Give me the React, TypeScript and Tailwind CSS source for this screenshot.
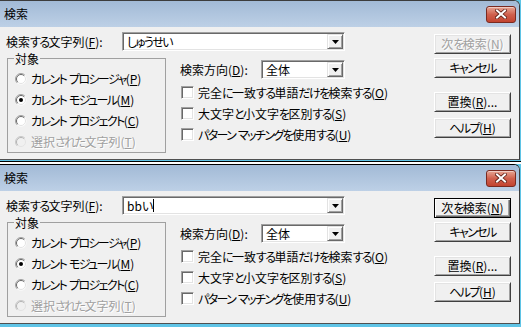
const SUNKEN =
  "border border-t-[#a0a0a0] border-l-[#a0a0a0] border-r-white border-b-white bg-white shadow-[inset_1px_1px_0_#696969,inset_-1px_-1px_0_#e3e3e3]";
const RAISED =
  "border border-t-[#e3e3e3] border-l-[#e3e3e3] border-r-[#696969] border-b-[#696969] bg-[#f0f0f0] shadow-[inset_1px_1px_0_#fff,inset_-1px_-1px_0_#a0a0a0]";

// kana in the reference font are narrower than in Noto, so tighten them
function J({ t }: { t: string }) {
  return (
    <>
      {t.split(/([\u3040-\u30ff]+)/).map((s, i) =>
        /[\u3040-\u30ff]/.test(s) ? (
          <span key={i} className="tracking-[-1.6px]">
            {s}
          </span>
        ) : (
          s
        )
      )}
    </>
  );
}

function Key({ k }: { k: string }) {
  return <span className="underline underline-offset-[1px]">{k}</span>;
}

function CloseButton() {
  return (
    <div className="flex h-[17px] w-[30px] items-center justify-center rounded-[3px] border border-[#7a2a20] bg-gradient-to-b from-[#e6a594] via-[#d0604d] to-[#c2432f] shadow-[inset_0_1px_0_rgba(255,255,255,0.45)]">
      <svg width="12" height="10" viewBox="0 0 12 10">
        <path d="M2 1.5 L10 8.5 M10 1.5 L2 8.5" stroke="#5b1d14" strokeWidth="3.6" strokeLinecap="square" />
        <path d="M2 1.5 L10 8.5 M10 1.5 L2 8.5" stroke="#fff" strokeWidth="2" strokeLinecap="square" />
      </svg>
    </div>
  );
}

function Combo({ className, children }: { className: string; children?: React.ReactNode }) {
  return (
    <div className={`flex h-[19px] shrink-0 items-center ${SUNKEN} ${className}`}>
      <div className="flex flex-1 items-center whitespace-nowrap pl-[4px]">{children}</div>
      <div className={`mr-[1px] flex h-[15px] w-[16px] items-center justify-center ${RAISED}`}>
        <svg width="7" height="4" viewBox="0 0 7 4">
          <path d="M0 0 H7 L3.5 4 Z" fill="#000" />
        </svg>
      </div>
    </div>
  );
}

function Radio({ checked, disabled, children }: { checked?: boolean; disabled?: boolean; children: React.ReactNode }) {
  return (
    <div className="flex h-[21px] items-center gap-[4px] whitespace-nowrap">
      <svg width="12" height="12" viewBox="0 0 12 12" className="shrink-0">
        <circle cx="6" cy="6" r="5.5" fill={disabled ? "#f0f0f0" : "#fff"} />
        <path d="M2.1 9.9 A5.5 5.5 0 0 1 9.9 2.1" fill="none" stroke={disabled ? "#c8c8c8" : "#a0a0a0"} />
        <path d="M2.8 9.2 A4.5 4.5 0 0 1 9.2 2.8" fill="none" stroke={disabled ? "#b4b4b4" : "#696969"} />
        <path d="M9.2 2.8 A4.5 4.5 0 0 1 2.8 9.2" fill="none" stroke="#e3e3e3" />
        {checked && <circle cx="6" cy="6" r="2" fill="#000" />}
      </svg>
      <span className={disabled ? "text-[#a0a0a0] [text-shadow:1px_1px_0_#fff]" : ""}>{children}</span>
    </div>
  );
}

function Check({ children }: { children: React.ReactNode }) {
  return (
    <div className="flex h-[21px] items-center gap-[4px] whitespace-nowrap pl-[1px]">
      <div className={`h-[13px] w-[13px] shrink-0 ${SUNKEN}`} />
      <span>{children}</span>
    </div>
  );
}

function PushButton({ children, disabled, isDefault }: { children: React.ReactNode; disabled?: boolean; isDefault?: boolean }) {
  const frame = isDefault
    ? "border border-black bg-[#f0f0f0] shadow-[inset_1px_1px_0_#fff,inset_-1px_-1px_0_#696969,inset_-2px_-2px_0_#a0a0a0]"
    : "border border-t-white border-l-white border-r-[#404040] border-b-[#404040] bg-[#f0f0f0] shadow-[inset_1px_1px_0_#e3e3e3,inset_-1px_-1px_0_#a0a0a0]";
  return (
    <div
      className={`flex h-[20px] w-[77px] items-center justify-center whitespace-nowrap ${frame} ${
        disabled ? "text-[#a0a0a0] [text-shadow:1px_1px_0_#fff]" : ""
      }`}
    >
      {children}
    </div>
  );
}

function FindDialog({ text, focused, topBorder }: { text: string; focused?: boolean; topBorder: string }) {
  return (
    <div className={`w-[520px] overflow-hidden rounded-tr-[6px] border-t border-r border-b border-r-[#3c3c3c] border-b-[#505050] bg-[#f0f0f0] ${topBorder}`}>
      <div className="flex h-[26px] items-center justify-between bg-gradient-to-b from-[#a2bad6] to-[#bdd0e6] pl-[4px] pr-[3px]">
        <span>検索</span>
        <CloseButton />
      </div>

      <div className="flex h-[132px]">
        <div className="w-[345px] shrink-0">
          <div className="mt-[5px] flex h-[19px] items-center pl-[6px]">
            <span className="w-[116px] shrink-0 whitespace-nowrap">
              <J t="検索する文字列" />(<Key k="F" />):
            </span>
            <Combo className="w-[223px]">
              <span>
                <J t={text} />
              </span>
              {focused && <span className="ml-[1px] h-[13px] w-[1px] bg-black" />}
            </Combo>
          </div>

          <div className="mt-[1px] flex">
            <fieldset className="ml-[7px] h-[101px] w-[159px] shrink-0 border border-[#a0a0a0] pl-[7px]">
              <legend className="ml-[-1px] px-[1px] leading-[13px]">対象</legend>
              <div className="pt-[3px]">
                <Radio>
                  <J t="カレント プロシージャ" />(<Key k="P" />)
                </Radio>
                <Radio checked>
                  <J t="カレント モジュール" />(<Key k="M" />)
                </Radio>
                <Radio>
                  <J t="カレント プロジェクト" />(<Key k="C" />)
                </Radio>
                <Radio disabled>
                  <J t="選択された文字列" />(<Key k="T" />)
                </Radio>
              </div>
            </fieldset>

            <div className="ml-[14px] min-w-0 flex-1 pt-[8px]">
              <div className="flex h-[19px] items-center">
                <span className="w-[81px] shrink-0 whitespace-nowrap">
                  検索方向(<Key k="D" />):
                </span>
                <Combo className="w-[84px]">全体</Combo>
              </div>
              <div className="mt-[3px]">
                <Check>
                  <J t="完全に一致する単語だけを検索する" />(<Key k="O" />)
                </Check>
                <Check>
                  <J t="大文字と小文字を区別する" />(<Key k="S" />)
                </Check>
                <Check>
                  <J t="パターン マッチングを使用する" />(<Key k="U" />)
                </Check>
              </div>
            </div>
          </div>
        </div>

        <div className="ml-[89px] flex w-[77px] shrink-0 flex-col pt-[7px]">
          <PushButton disabled={!focused} isDefault={focused}>
            <J t="次を検索" />(<Key k="N" />)
          </PushButton>
          <div className="mt-[4px]">
            <PushButton>
              <J t="キャンセル" />
            </PushButton>
          </div>
          <div className="mt-[14px]">
            <PushButton>
              置換(<Key k="R" />)...
            </PushButton>
          </div>
          <div className="mt-[6px]">
            <PushButton>
              <J t="ヘルプ" />(<Key k="H" />)
            </PushButton>
          </div>
        </div>
      </div>
    </div>
  );
}

export default function App() {
  return (
    <div className="flex h-[327px] w-[521px] flex-col overflow-hidden bg-[#5fc4e6] text-[12px] leading-[14px] text-black [font-family:'Noto_Sans_CJK_JP',sans-serif] [font-feature-settings:'palt']">
      <FindDialog text="しゅうせい" topBorder="border-t-[#3c3c3c]" />
      <div className="mt-[1px] h-[1px] w-full shrink-0 bg-black" />
      <div className="h-[2px] w-full shrink-0 bg-white" />
      <FindDialog text="bbい" focused topBorder="border-t-black" />
    </div>
  );
}
